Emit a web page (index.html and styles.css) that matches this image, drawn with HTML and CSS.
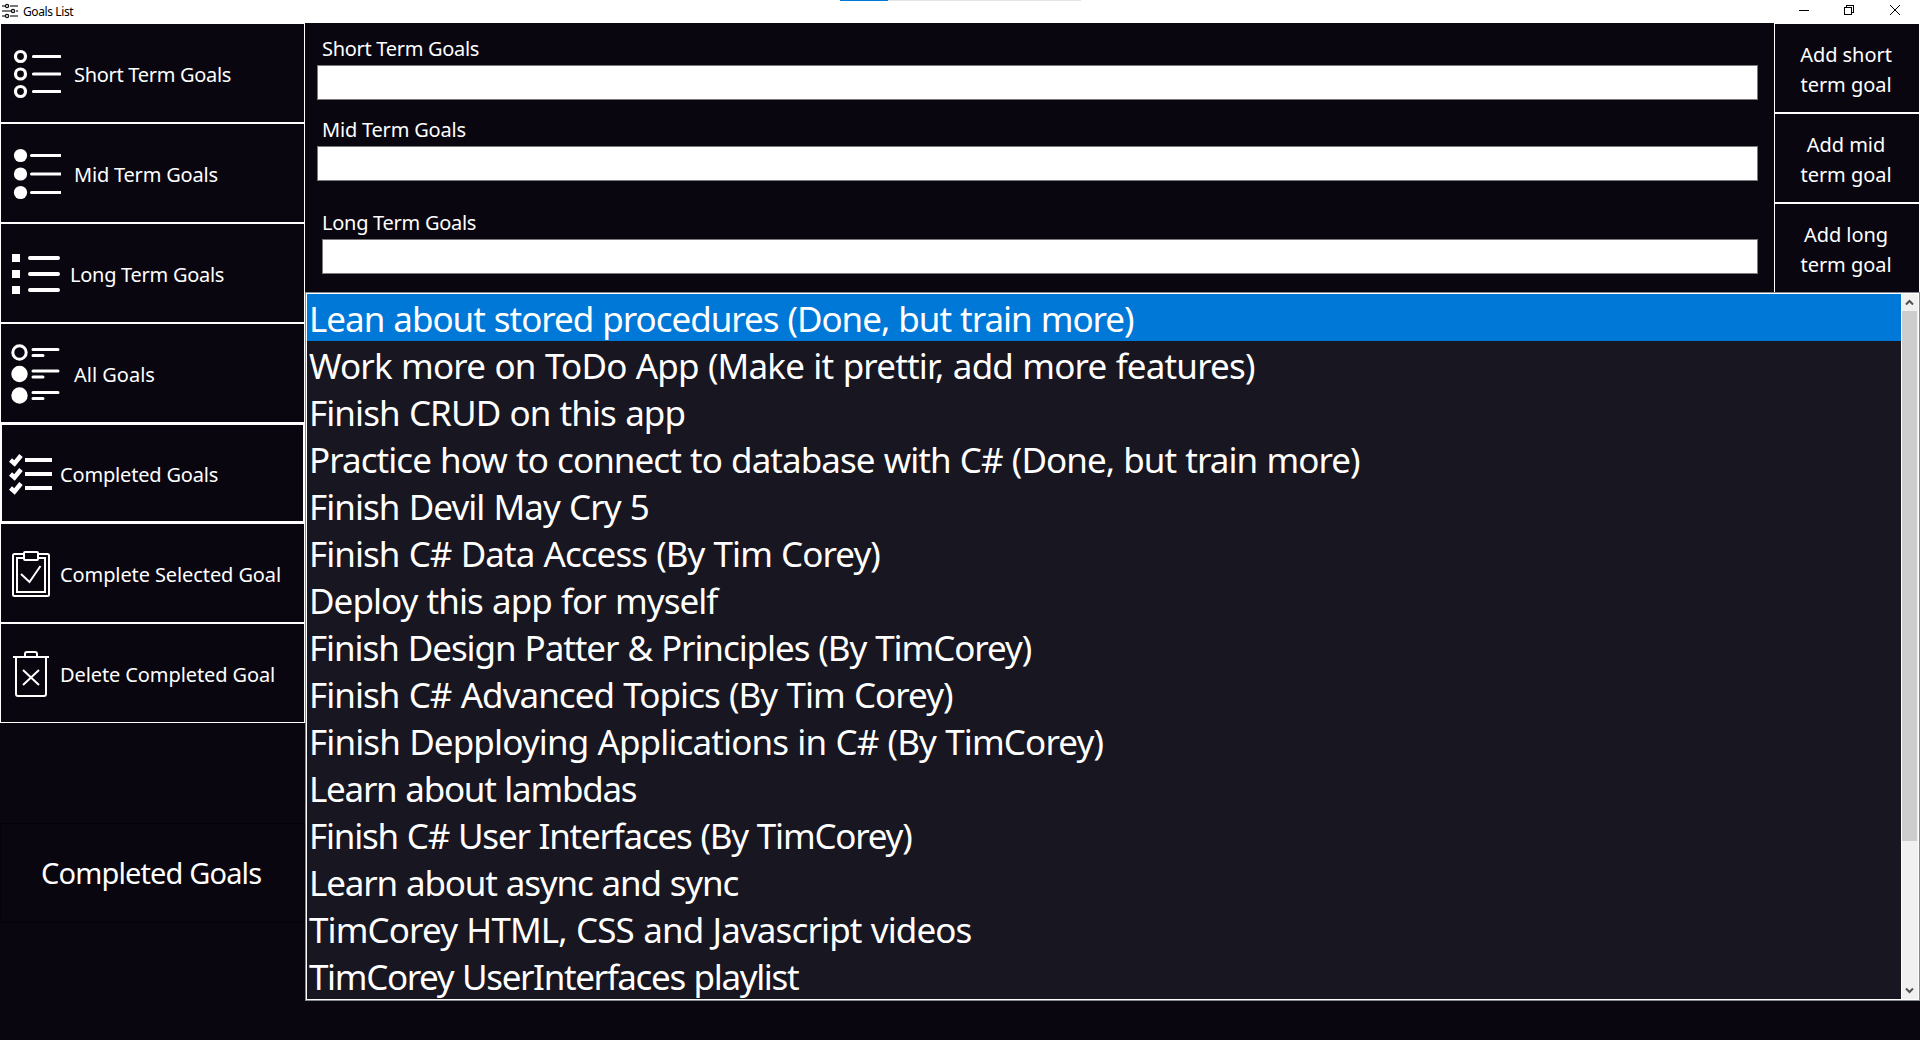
FILE: index.html
```html
<!DOCTYPE html>
<html lang="en">
<head>
<meta charset="utf-8">
<title>Goals List</title>
<link rel="stylesheet" href="styles.css">
</head>
<body>
<header class="titlebar">
  <svg class="app-icon" width="16" height="16" viewBox="0 0 16 16"><path d="M0 3H4M8 3H16M0 8H10M14 8H16M0 13H4M8 13H16" stroke="#777" stroke-width="2"/><g fill="#fff" stroke="#111" stroke-width="1.3"><circle cx="5" cy="3" r="1.6"/><circle cx="11" cy="8" r="1.6"/><circle cx="5" cy="13" r="1.6"/></g></svg>
  <h1 class="title">Goals List</h1>
  <div class="progress"></div>
  <svg class="window-controls" width="104" height="12" viewBox="0 0 104 12" fill="none" stroke="#000" shape-rendering="crispEdges"><path d="M0 5.5H10"/><path d="M45.500 2.500H52.500V9.500H45.500ZM47.500 2.500V.500H54.500V7.500H52.500"/><path d="M91 0L101 10M101 0L91 10" shape-rendering="auto"/></svg>
</header>
<div class="app">
  <nav class="sidebar">
    <button class="nav"><svg width="60" height="60" viewBox="0 0 60 60" fill="none" stroke="#fff" stroke-width="3.200"><circle cx="19.500" cy="12.500" r="5"/><circle cx="19.500" cy="30" r="5"/><circle cx="19.500" cy="47.500" r="5"/><path stroke-linecap="round" d="M32.500 12.500H59M32.500 30H59M32.500 47.500H59"/></svg><span class="lead-a t1">Short Term Goals</span></button>
    <button class="nav"><svg width="60" height="60" viewBox="0 0 60 60" fill="#fff" stroke="#fff"><g stroke="none"><circle cx="19.500" cy="11.500" r="6.600"/><circle cx="19.500" cy="30" r="6.600"/><circle cx="19.500" cy="48.500" r="6.600"/></g><path stroke-width="3" stroke-linecap="round" d="M30.500 11.500H59.500M30.500 30H59.500M30.500 48.500H59.500"/></svg><span class="lead-a t2">Mid Term Goals</span></button>
    <button class="nav"><svg width="60" height="60" viewBox="0 0 60 60" fill="#fff" stroke="#fff"><path stroke="none" d="M11 10H19V18H11ZM11 26H19V34H11ZM11 42H19V50H11Z"/><path stroke-width="4" stroke-linecap="round" d="M29 14H57M29 30H57M29 46H57"/></svg><span class="lead-b t3">Long Term Goals</span></button>
    <button class="nav"><svg width="60" height="60" viewBox="0 0 60 60" fill="#fff" stroke="#fff" stroke-width="3"><circle cx="18.500" cy="8.500" r="6.700" fill="none"/><circle cx="18.500" cy="30" r="6.700"/><circle cx="18.500" cy="51.500" r="6.700"/><path stroke-linecap="round" d="M32 5.500H57M32 11.500H42M32 27H57M32 33H42M32 48.500H57M32 54.500H42"/></svg><span class="lead-a">All Goals</span></button>
    <button class="nav focused"><svg width="60" height="60" viewBox="0 0 60 60" fill="none" stroke="#fff" stroke-width="4"><path d="M23 16H50M23 30H50M23 44H50"/><path stroke-width="4.500" d="M8.500 16L12.500 19.500L19 11.500M8.500 30L12.500 33.500L19 25.500M8.500 44L12.500 47.500L19 39.500"/></svg><span class="lead-c t5">Completed Goals</span></button>
    <button class="nav"><svg width="60" height="60" viewBox="0 0 60 60" fill="none" stroke="#fff" stroke-width="2"><rect x="12" y="10" width="36" height="42" rx="1.500"/><rect x="16" y="14" width="28" height="34"/><rect x="23" y="8" width="14" height="8" rx="1" fill="#09060f"/><path d="M20 30L28.500 38L39.500 22"/></svg><span class="lead-d t6">Complete Selected Goal</span></button>
    <button class="nav"><svg width="60" height="60" viewBox="0 0 60 60" fill="none" stroke="#fff" stroke-width="2"><path d="M12 13H48M15 13V50Q15 52 17 52H43Q45 52 45 50V13M24 13V10Q24 8 26 8H34Q36 8 36 10V13M22 26L38 41M38 26L22 41"/></svg><span class="lead-d t6">Delete Completed Goal</span></button>
    <h2 class="current">Completed Goals</h2>
  </nav>
  <main class="content">
    <section class="entry">
      <form class="fields">
        <label class="field"><span class="t1">Short Term Goals</span><input type="text"></label>
        <label class="field"><span class="t2">Mid Term Goals</span><input type="text"></label>
        <label class="field last"><span class="t3">Long Term Goals</span><input type="text"></label>
      </form>
      <div class="actions">
        <button>Add short<br>term goal</button>
        <button>Add mid<br>term goal</button>
        <button>Add long<br>term goal</button>
      </div>
    </section>
    <section class="listbox">
      <ul class="goals">
        <li class="selected g1">Lean about stored procedures (Done, but train more)</li>
        <li class="g2">Work more on ToDo App (Make it prettir, add more features)</li>
        <li class="g3">Finish CRUD on this app</li>
        <li>Practice how to connect to database with C# (Done, but train more)</li>
        <li>Finish Devil May Cry 5</li>
        <li>Finish C# Data Access (By Tim Corey)</li>
        <li>Deploy this app for myself</li>
        <li class="g8">Finish Design Patter &amp; Principles (By TimCorey)</li>
        <li>Finish C# Advanced Topics (By Tim Corey)</li>
        <li class="g10">Finish Depploying Applications in C# (By TimCorey)</li>
        <li class="g11">Learn about lambdas</li>
        <li class="g12">Finish C# User Interfaces (By TimCorey)</li>
        <li class="g13">Learn about async and sync</li>
        <li class="g14">TimCorey HTML, CSS and Javascript videos</li>
        <li class="g15">TimCorey UserInterfaces playlist</li>
      </ul>
      <div class="scrollbar">
        <svg width="16" height="17" viewBox="0 0 16 17" fill="none" stroke="#505050" stroke-width="2"><path d="M4 10.500L7.500 7L11 10.500"/></svg>
        <div class="thumb"></div>
        <svg width="16" height="17" viewBox="0 0 16 17" fill="none" stroke="#505050" stroke-width="2"><path d="M4 6.500L7.500 10L11 6.500"/></svg>
      </div>
    </section>
  </main>
</div>
</body>
</html>
```
FILE: styles.css
```css
* { box-sizing: border-box; }
body { margin: 0; height: 1040px; overflow: hidden; background: #09060f; color: #fff; font-family: "Noto Sans", sans-serif; font-size: 20px; }
button { margin: 0; padding: 0; font: inherit; color: inherit; background: #09060f; border: 1px solid #fff; border-radius: 0; }

.titlebar { position: relative; height: 23px; background: #fff; color: #000; display: flex; align-items: center; padding: 0 17px 0 2px; }
.app-icon { margin: -1px 5px 0 0; }
.title { margin: 0; font-size: 12px; font-weight: 400; line-height: 23px; letter-spacing: -0.4px; flex: 1; }
.progress { position: absolute; top: 0; left: 840px; width: 241px; height: 1px; background: linear-gradient(90deg, #0078d7 48px, #e5e5e5 48px); }
.window-controls { align-self: flex-start; margin-top: 5px; }

.app { display: flex; height: 1017px; }
.sidebar { width: 305px; display: flex; flex-direction: column; }
.nav { height: 100px; padding-top: 2px; display: flex; align-items: center; text-align: left; white-space: nowrap; }
.focused { border-width: 2px; }
.nav svg { flex: none; }
.lead-a { margin-left: 13px; }
.lead-b { margin-left: 9px; }
.lead-c { margin-left: -2px; }
.lead-d { margin-left: -1px; }
.t1 { letter-spacing: -0.3px; }
.t2 { letter-spacing: -0.2px; }
.t3 { letter-spacing: -0.27px; }
.t5 { letter-spacing: -0.17px; }
.t6 { letter-spacing: -0.1px; }
.current { margin: 100px 0 0; height: 100px; border: 1px solid #050308; padding-left: 40px; font-size: 29px; font-weight: 400; line-height: 98px; letter-spacing: -0.86px; white-space: nowrap; }

.content { width: 1615px; display: flex; flex-direction: column; }
.entry { height: 269px; display: flex; }
.fields { width: 1469px; padding: 12px 16px 0 12px; }
.field { display: block; height: 81px; }
.field span { display: block; height: 30px; line-height: 28px; padding-left: 5px; }
.field input { display: block; width: 100%; height: 35px; padding: 0; border: 1px solid #7a7a7a; background: #fff; }
.last { padding: 12px 0 0 5px; }
.last span { padding-left: 0; }
.actions { width: 146px; display: flex; flex-direction: column; }
.actions button { flex: none; height: 90px; padding: 3px 2px 0 0; line-height: 30px; letter-spacing: -0.05px; }
.actions button:last-child { height: 89px; border-bottom: 0; }

.listbox { height: 709px; border: 1px solid #828790; padding: 1px; background: #fff; display: flex; }
.goals { flex: 1; margin: 0; padding: 0; list-style: none; background: #181620; font-size: 35px; letter-spacing: -0.95px; word-spacing: 1px; }
.goals li { height: 47px; line-height: 47px; padding: 1px 0 0 2px; white-space: pre; }
.goals .selected { background: #0078d7; }
.g1 { letter-spacing: -1.03px; }
.g2 { letter-spacing: -0.83px; }
.g3 { letter-spacing: -0.92px; }
.g8 { letter-spacing: -1.08px; }
.g10 { letter-spacing: -0.88px; }
.g11 { letter-spacing: -1.27px; }
.g12 { letter-spacing: -1.22px; }
.g13 { letter-spacing: -1.16px; }
.g14 { letter-spacing: -0.88px; }
.g15 { letter-spacing: -1.36px; }
.scrollbar { width: 17px; background: #f0f0f0; border-left: 1px solid #fff; display: flex; flex-direction: column; }
.scrollbar svg { flex: none; }
.thumb { height: 530px; width: 15px; background: #cdcdcd; margin-bottom: auto; }
```
